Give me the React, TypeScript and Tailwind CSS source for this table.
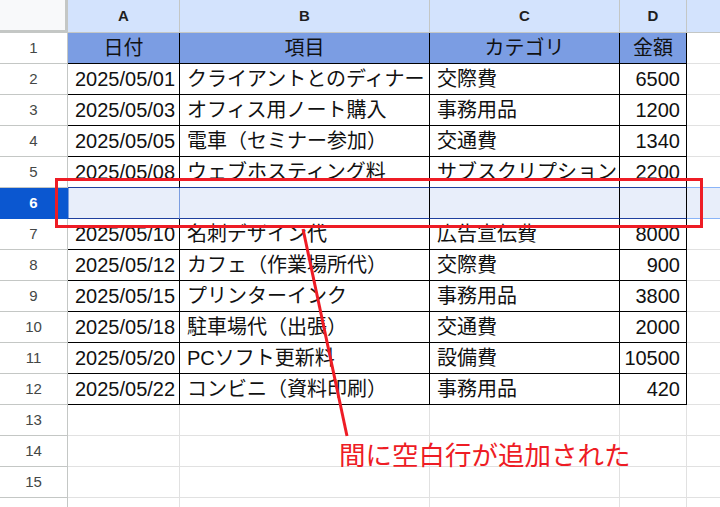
import React from 'react';

type Row = [string, string, string, string];

const rows: (Row | null)[] = [
  ['日付', '項目', 'カテゴリ', '金額'],
  ['2025/05/01', 'クライアントとのディナー', '交際費', '6500'],
  ['2025/05/03', 'オフィス用ノート購入', '事務用品', '1200'],
  ['2025/05/05', '電車（セミナー参加）', '交通費', '1340'],
  ['2025/05/08', 'ウェブホスティング料', 'サブスクリプション', '2200'],
  null,
  ['2025/05/10', '名刺デザイン代', '広告宣伝費', '8000'],
  ['2025/05/12', 'カフェ（作業場所代）', '交際費', '900'],
  ['2025/05/15', 'プリンターインク', '事務用品', '3800'],
  ['2025/05/18', '駐車場代（出張）', '交通費', '2000'],
  ['2025/05/20', 'PCソフト更新料', '設備費', '10500'],
  ['2025/05/22', 'コンビニ（資料印刷）', '事務用品', '420'],
  null,
  null,
  null,
  null,
];

const widths = ['w-[112px]', 'w-[250px]', 'w-[190px]', 'w-[67px]'];

export default function App() {
  return (
    <div
      className="relative w-[720px] h-[507px] overflow-hidden bg-white text-[#111]"
      style={{ fontFamily: '"Liberation Sans", "Noto Sans CJK JP", sans-serif' }}
    >
      {/* column headers */}
      <div className="flex h-[33px]">
        <div className="w-[68px] shrink-0 bg-[#f8f9fa] border-r-[3px] border-b-[3px] border-[#c4c7c5]" />
        {['A', 'B', 'C', 'D'].map((c, i) => (
          <div
            key={c}
            className={`${widths[i]} shrink-0 flex items-center justify-center bg-[#d3e3fd] border-r border-b border-[#c4c7c5] text-[15px] font-bold text-[#1f1f1f]`}
          >
            {c}
          </div>
        ))}
        <div className="flex-1 bg-[#d3e3fd] border-b border-[#c4c7c5]" />
      </div>

      {rows.map((r, idx) => {
        const n = idx + 1;
        const sel = n === 6;
        const inTable = n <= 12;
        const aboveSel = n === 5;
        return (
          <div key={n} className="flex h-[31px]">
            <div
              className={`w-[68px] shrink-0 flex items-center justify-center border-r border-b text-[15px] ${
                sel
                  ? 'bg-[#0b57d0] text-white font-bold border-[#0b57d0]'
                  : 'bg-white text-[#444746] border-[#c4c7c5]'
              }`}
            >
              {n}
            </div>
            {[0, 1, 2, 3].map((ci) => {
              const txt = r ? r[ci] : '';
              const header = n === 1;
              let cls = `${widths[ci]} shrink-0 flex items-center border-r border-b text-[20px] whitespace-nowrap overflow-visible `;
              if (header) cls += 'bg-[#7b9de3] justify-center border-black ';
              else if (sel)
                cls += `bg-[#e8eefa] border-b-[#1f3f9e] ${ci === 0 ? 'border-r-[#7b9de0] shadow-[inset_1px_0_0_#7b9de0]' : 'border-r-black'} `;
              else if (inTable) cls += `${aboveSel ? 'border-b-[#1f3f9e] border-r-black' : 'border-black'} `;
              else cls += 'border-[#e1e1e1] ';
              if (!header) cls += ci === 3 ? 'justify-end pr-[6px] ' : 'pl-[7px] ';
              return (
                <div key={ci} className={cls}>
                  {txt}
                </div>
              );
            })}
            <div
              className={`flex-1 border-b ${
                sel ? 'bg-[#e8eefa] border-[#8ab4f8]' : aboveSel ? 'border-[#8ab4f8]' : 'border-[#e1e1e1]'
              }`}
            />
          </div>
        );
      })}

      {/* annotation overlay */}
      <div className="absolute left-[55px] top-[178px] w-[648px] h-[50px] border-[3px] border-[#ee1c25]" />
      <svg className="absolute left-0 top-0 pointer-events-none" width="720" height="507">
        <line x1="303" y1="229" x2="347" y2="436" stroke="#ee1c25" strokeWidth="3" />
      </svg>
      <div
        className="absolute left-[339px] top-[436px] text-[26.5px] leading-[36px] text-[#ee1c25] whitespace-nowrap"
        style={{ fontFamily: '"Noto Sans CJK JP", sans-serif' }}
      >
        間に空白行が追加された
      </div>
    </div>
  );
}
